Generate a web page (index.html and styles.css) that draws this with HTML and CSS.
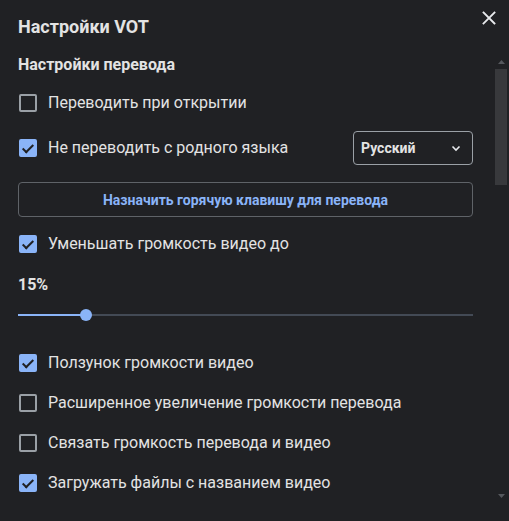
FILE: index.html
```html
<!DOCTYPE html>
<html lang="ru">
<head>
<meta charset="utf-8">
<link rel="stylesheet" href="styles.css">
</head>
<body>
<div class="dialog">
  <div class="header">
    <h1 class="title">Настройки VOT</h1>
    <button class="close" aria-label="Закрыть">
      <svg width="14" height="14" viewBox="0 0 14 14"><path d="M1.5 1.5 L12.5 12.5 M12.5 1.5 L1.5 12.5" stroke="#e8eaed" stroke-width="1.8" fill="none" stroke-linecap="square"/></svg>
    </button>
  </div>
  <div class="body">
    <div class="content">
      <h2 class="section">Настройки перевода</h2>

      <label class="row r1"><span class="cb"></span><span class="label">Переводить при открытии</span></label>

      <div class="row r2">
        <label class="row-inner"><span class="cb checked"></span><span class="label">Не переводить с родного языка</span></label>
        <div class="select"><span>Русский</span>
          <svg width="12" height="12" viewBox="0 0 12 12"><path d="M2.5 4.5 L6 8 L9.5 4.5" stroke="#e8eaed" stroke-width="1.6" fill="none"/></svg>
        </div>
      </div>

      <button class="btn">Назначить горячую клавишу для перевода</button>

      <label class="row r3"><span class="cb checked"></span><span class="label">Уменьшать громкость видео до</span></label>

      <div class="value">15%</div>
      <div class="slider">
        <div class="track"><div class="fill" style="width:15%"></div><div class="thumb" style="left:15%"></div></div>
      </div>

      <div class="list">
        <label class="row"><span class="cb checked"></span><span class="label">Ползунок громкости видео</span></label>
        <label class="row"><span class="cb"></span><span class="label">Расширенное увеличение громкости перевода</span></label>
        <label class="row"><span class="cb"></span><span class="label">Связать громкость перевода и видео</span></label>
        <label class="row"><span class="cb checked"></span><span class="label">Загружать файлы с названием видео</span></label>
      </div>
    </div>
    <div class="scrollbar" aria-hidden="true">
      <div class="sb-btn"><svg width="7" height="4" viewBox="0 0 7 4"><path d="M0 4 L3.5 0 L7 4 Z" fill="#55585d"/></svg></div>
      <div class="sb-track"><div class="sb-thumb"></div></div>
      <div class="sb-btn"><svg width="7" height="4" viewBox="0 0 7 4"><path d="M0 0 L3.5 4 L7 0 Z" fill="#55585d"/></svg></div>
    </div>
  </div>
</div>
</body>
</html>
```
FILE: styles.css
```css
* { box-sizing: border-box; }
html, body {
  margin: 0;
  padding: 0;
  background: #202124;
  width: 509px;
  height: 521px;
  overflow: hidden;
}
body {
  font-family: Roboto, "Liberation Sans", sans-serif;
  color: #e3e3e3;
}
.dialog {
  width: 509px;
  height: 521px;
  display: flex;
  flex-direction: column;
  background: #202124;
}
.header {
  height: 52px;
  flex: none;
  display: flex;
  align-items: flex-start;
  justify-content: space-between;
  padding: 15px 13px 0 18px;
}
.title {
  margin: 0;
  font-size: 18px;
  line-height: 24px;
  font-weight: 700;
  color: #e3e3e3;
}
.close {
  background: none;
  border: 0;
  padding: 0;
  margin-top: -4px;
  width: 14px;
  height: 14px;
  display: flex;
}
.body {
  flex: 1;
  display: flex;
  min-height: 0;
}
.content {
  flex: 1;
  padding: 0 22px 0 18px;
  overflow: hidden;
}
.scrollbar {
  width: 13px;
  height: 447px;
  margin: 3px 1px 0 0;
  display: flex;
  flex-direction: column;
  flex: none;
}
.sb-btn {
  height: 13px;
  display: flex;
  align-items: center;
  justify-content: center;
  flex: none;
}
.sb-track {
  flex: 1;
  padding: 1px 1px 0 0;
}
.sb-thumb {
  height: 116px;
  background: #38393c;
}
.section {
  margin: 2px 0 0;
  font-size: 16px;
  line-height: 22px;
  font-weight: 700;
  color: #e3e3e3;
}
.row {
  height: 34px;
  display: flex;
  align-items: center;
}
.row-inner {
  display: flex;
  align-items: center;
}
.r1 { margin-top: 10px; }
.r2 {
  margin-top: 11px;
  justify-content: space-between;
}
.r3 { margin-top: 10px; }
.cb {
  width: 18px;
  height: 18px;
  margin-left: 1px;
  border: 2px solid #9aa0a6;
  border-radius: 2px;
  flex: none;
  position: relative;
}
.cb.checked {
  background: #8ab4f8;
  border-color: #8ab4f8;
}
.cb.checked::after {
  content: "";
  position: absolute;
  left: 4px;
  top: 1px;
  width: 4px;
  height: 9px;
  border: solid #202124;
  border-width: 0 2px 2px 0;
  transform: rotate(45deg);
}
.label {
  margin-left: 11px;
  font-size: 16px;
  line-height: 20px;
  color: #e3e3e3;
}
.select {
  width: 120px;
  height: 34px;
  border: 1px solid #9aa0a6;
  border-radius: 4px;
  display: flex;
  align-items: center;
  justify-content: space-between;
  padding: 0 10px 0 7px;
  font-size: 14px;
  font-weight: 700;
  color: #e3e3e3;
}
.btn {
  display: block;
  width: 100%;
  height: 35px;
  margin-top: 17px;
  background: transparent;
  border: 1px solid #5f6368;
  border-radius: 4px;
  color: #8ab4f8;
  font-family: Roboto, "Liberation Sans", sans-serif;
  font-size: 14px;
  font-weight: 700;
}
.value {
  margin-top: 14px;
  font-size: 16px;
  line-height: 20px;
  font-weight: 700;
  color: #e3e3e3;
}
.slider {
  margin-top: 10px;
  height: 20px;
  display: flex;
  align-items: center;
}
.track {
  position: relative;
  width: 100%;
  height: 2px;
  background: #434a55;
}
.fill {
  height: 2px;
  background: #8ab4f8;
}
.thumb {
  position: absolute;
  top: -5px;
  width: 12px;
  height: 12px;
  margin-left: -6px;
  border-radius: 50%;
  background: #8ab4f8;
}
.list {
  margin-top: 21px;
  display: flex;
  flex-direction: column;
  gap: 6px;
}
```
